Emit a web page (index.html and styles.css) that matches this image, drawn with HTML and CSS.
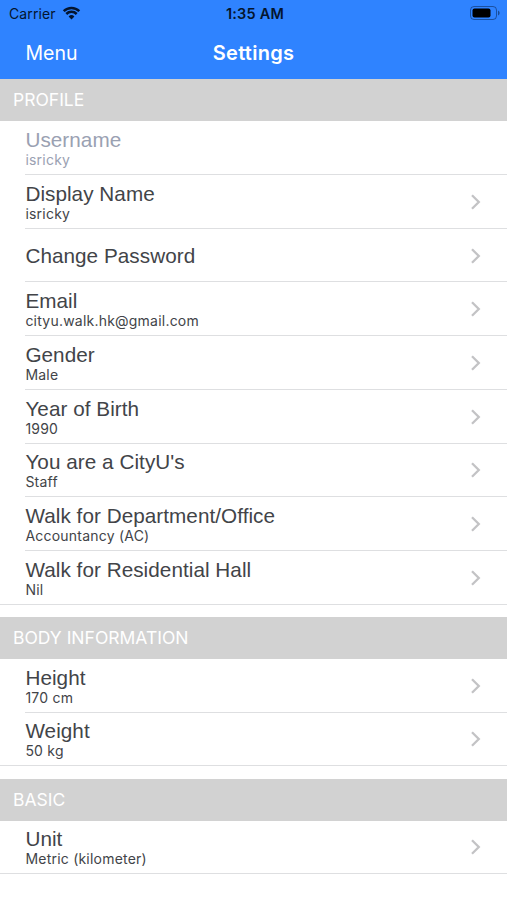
FILE: index.html
```html
<!DOCTYPE html>
<html lang="en">
<head>
<meta charset="utf-8">
<title>Settings</title>
<link rel="stylesheet" href="styles.css">
</head>
<body>
<header class="top">
  <div class="status">
    <div class="carrier"><span>Carrier</span>
      <svg class="wifi" width="19" height="14" viewBox="0 0 18 14"><path d="M9 13.4 6.1 10.5a4.1 4.1 0 0 1 5.8 0z" fill="currentColor"/><path d="M3.8 8a7.4 7.4 0 0 1 10.4 0M1.2 5.1a11.2 11.2 0 0 1 15.6 0" fill="none" stroke="currentColor" stroke-width="2.5"/></svg>
    </div>
    <div class="time">1:35 AM</div>
    <svg class="battery" width="31" height="14" viewBox="0 0 31 14"><rect x=".5" y=".5" width="26" height="13" rx="3.5" fill="none" stroke="currentColor" opacity=".45"/><rect x="2.5" y="2.5" width="18" height="9" rx="2" fill="#000"/><path d="M28 4.5v5a2.7 2.7 0 0 0 0-5z" fill="currentColor" opacity=".5"/></svg>
  </div>
  <nav class="nav"><span class="menu">Menu</span><h1>Settings</h1><span></span></nav>
</header>
<main id="settings"></main>
<script src="app.js"></script>
</body>
</html>
```
FILE: styles.css
```css
* { box-sizing: border-box; }
body { margin: 0; width: 507px; height: 900px; overflow: hidden; background: #fff; color: #424448; font-family: Inter, sans-serif; }
.top { height: 79.4px; background: #2f83ff; }
.status { height: 27px; display: grid; grid-template-columns: 1fr auto 1fr; align-items: center; padding: 0 6px 0 9px; color: #04152e; font-size: 14px; }
.carrier { display: flex; align-items: center; gap: 6px; letter-spacing: .1px; }
.wifi { margin-top: -2px; }
.time { font-weight: 600; font-size: 14.5px; letter-spacing: .2px; }
.battery { justify-self: end; margin-top: -1px; }
.nav { height: 51px; display: grid; grid-template-columns: 1fr auto 1fr; align-items: center; padding: 0 25.5px; color: #fff; font-size: 19.5px; }
h1 { margin: 0; font-size: 20px; font-weight: 600; letter-spacing: .25px; }
.section { padding-bottom: 12.3px; }
.section h2 { margin: 0; height: 42px; padding-left: 13px; background: #d2d2d2; color: #fff; font-size: 17.5px; font-weight: 400; line-height: 42px; }
.row { height: 53.7px; margin-left: 25px; padding: 1px 25px 0 .4px; border-bottom: 1px solid #dedfe1; display: flex; align-items: center; justify-content: space-between; }
.row.last { margin-left: 0; padding-left: 25.4px; }
.label { font: 20.7px/24px "Liberation Sans", sans-serif; letter-spacing: .05px; }
.value { font-size: 14px; line-height: 16px; letter-spacing: .22px; }
.muted { color: #9aa1b2; }
```
FILE: app.js
```js
const sections = [
  ["PROFILE", [["Username", "isricky"], ["Display Name", "isricky"], ["Change Password", ""], ["Email", "cityu.walk.hk@gmail.com"], ["Gender", "Male"], ["Year of Birth", "1990"], ["You are a CityU's", "Staff"], ["Walk for Department/Office", "Accountancy (AC)"], ["Walk for Residential Hall", "Nil"]]],
  ["BODY INFORMATION", [["Height", "170 cm"], ["Weight", "50 kg"]]],
  ["BASIC", [["Unit", "Metric (kilometer)"]]]
];
const chevron = '<svg width="12" height="18" viewBox="0 0 12 18"><path d="m2 2.2 6.8 6.8L2 15.8" fill="none" stroke="#c3c3c5" stroke-width="2.3"/></svg>';
document.getElementById("settings").innerHTML = sections.map(([title, rows]) =>
  `<section class="section"><h2>${title}</h2>${rows.map(([label, value], i) => {
    const muted = label === "Username";
    return `<div class="row${muted ? " muted" : ""}${i === rows.length - 1 ? " last" : ""}"><div><div class="label">${label}</div>${value ? `<div class="value">${value}</div>` : ""}</div>${muted ? "" : chevron}</div>`;
  }).join("")}</section>`).join("");
```
